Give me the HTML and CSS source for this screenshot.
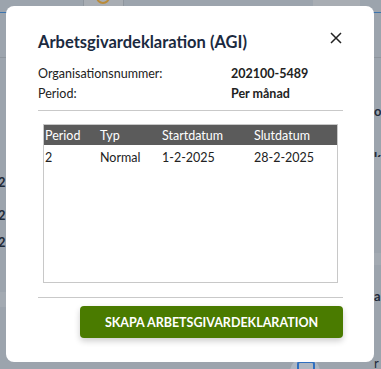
FILE: index.html
```html
<!DOCTYPE html>
<html lang="sv">
<head>
<meta charset="utf-8">
<link rel="stylesheet" href="styles.css">
</head>
<body>
<div class="page">
  <div class="topbar">
    <div class="tab tab-icon"><span class="ring"></span></div>
    <div class="tab tab-right"></div>
  </div>
  <div class="bluebar"></div>
  <div class="rowline r1"></div>
  <div class="bg-left">
    <span class="n n1">2</span>
    <span class="n n2">2</span>
    <span class="n n3">2</span>
  </div>
  <div class="bg-right">
    <span class="c c1">o</span>
    <span class="c c2">k</span>
    <span class="c c3">a</span>
    <span class="c c4">r</span>
  </div>
  <div class="band bl"></div>
  <div class="band br1"></div>
  <div class="band br2"></div>
  <div class="bottom-icon"></div>
</div>

<div class="modal">
  <div class="modal-head">
    <h1 class="modal-title">Arbetsgivardeklaration (AGI)</h1>
    <button class="close" aria-label="Stäng">
      <svg width="12" height="12" viewBox="0 0 12 12"><path d="M1 1L11 11M11 1L1 11" stroke="#222" stroke-width="1.5" fill="none"/></svg>
    </button>
  </div>
  <div class="info">
    <div class="info-row"><span class="label">Organisationsnummer:</span><span class="value">202100-5489</span></div>
    <div class="info-row"><span class="label">Period:</span><span class="value">Per månad</span></div>
  </div>
  <div class="divider"></div>
  <div class="table-box">
    <table class="tbl">
      <thead>
        <tr><th class="c-period">Period</th><th class="c-typ">Typ</th><th class="c-start">Startdatum</th><th>Slutdatum</th></tr>
      </thead>
      <tbody>
        <tr><td>2</td><td>Normal</td><td>1-2-2025</td><td>28-2-2025</td></tr>
      </tbody>
    </table>
  </div>
  <div class="divider d2"></div>
  <div class="actions">
    <button class="primary">SKAPA ARBETSGIVARDEKLARATION</button>
  </div>
</div>
</body>
</html>
```
FILE: styles.css
```css
* { box-sizing: border-box; }
html, body { margin: 0; padding: 0; }
body {
  width: 381px;
  height: 369px;
  overflow: hidden;
  background: #9ca4ad;
  font-family: "Lato", "Noto Sans", sans-serif;
  position: relative;
}
.page { position: relative; width: 381px; height: 369px; }
.topbar { height: 12px; position: relative; }
.tab { position: absolute; top: 0; height: 12px; background: #a8adb3; }
.tab-icon { left: 83px; width: 41px; border-left: 1px solid #8f969e; border-right: 1px solid #8f969e; }
.ring { position: absolute; left: 12px; top: -10px; width: 14px; height: 14px; border: 2px solid #b98b3a; border-radius: 50%; }
.tab-right { left: 313px; width: 47px; }
.bluebar { position: absolute; top: 12px; left: 0; width: 381px; height: 1px; background: #3d74ad; }
.rowline { position: absolute; left: 0; width: 381px; height: 1px; background: #8e959d; }
.r1 { top: 57px; }
.bg-left, .bg-right { position: absolute; top: 0; font-weight: 700; color: #1f2b3a; font-size: 13px; }
.n, .c { position: absolute; }
.n { left: -2px; }
.n1 { top: 174px; } .n2 { top: 207px; } .n3 { top: 234px; }
.bg-right { left: 374px; }
.c1 { top: 103px; } .c2 { top: 149px; } .c3 { top: 288px; } .c4 { top: 355px; font-weight: 400; }
.band { position: absolute; background: #a3aab2; }
.bl { left: 0; top: 292px; width: 6px; height: 15px; }
.br1 { left: 374px; top: 157px; width: 7px; height: 13px; }
.br2 { left: 374px; top: 253px; width: 7px; height: 12px; }
.bottom-icon { position: absolute; left: 290px; top: 357px; width: 30px; height: 30px; border-radius: 50%; background: #aeb7c2; }
.bottom-icon::after { content: ""; position: absolute; left: 7px; top: 4px; width: 14px; height: 10px; border: 2px solid #2f6fc0; border-radius: 3px; }

.modal {
  position: absolute;
  left: 6px;
  top: 6px;
  width: 368px;
  height: 356px;
  background: #fff;
  border-radius: 8px;
  padding: 21px 31px 0 32px;
  display: flex;
  flex-direction: column;
}
.modal-head { display: flex; justify-content: space-between; align-items: flex-start; height: 36px; }
.modal-title { margin: 5px 0 0 0; font-size: 16.5px; font-weight: 700; color: #1b2a40; letter-spacing: 0; }
.close { border: 0; background: none; padding: 0; margin: 5px 1px 0 0; width: 12px; height: 12px; display: flex; }
.info { display: flex; flex-direction: column; }
.info-row { display: flex; height: 20px; align-items: center; font-size: 12.5px; color: #222; }
.label { width: 193px; }
.value { font-weight: 700; }
.divider { height: 1px; background: #c9c9c9; margin-top: 7px; }
.table-box { margin: 13px 5px 0 5px; height: 159px; border: 1px solid #c8c8c8; }
.tbl { border-collapse: collapse; width: 100%; font-size: 12.5px; }
.tbl th { background: #5b5b5b; color: #fff; font-weight: 400; text-align: left; height: 20px; padding: 0 0 0 1px; }
.tbl td { text-align: left; height: 24px; padding: 0 0 0 1px; color: #222; }
.c-period { width: 55px; }
.c-typ { width: 62px; }
.c-start { width: 92px; }
.d2 { margin-top: 14px; }
.actions { display: flex; justify-content: flex-end; margin-top: 8px; }
.primary {
  width: 263px;
  height: 32px;
  background: #4a7b00;
  color: #fff;
  border: 0;
  border-radius: 4px;
  font-family: inherit;
  font-weight: 700;
  font-size: 12.5px;
  box-shadow: 0 3px 6px rgba(0,0,0,0.2);
}
```
